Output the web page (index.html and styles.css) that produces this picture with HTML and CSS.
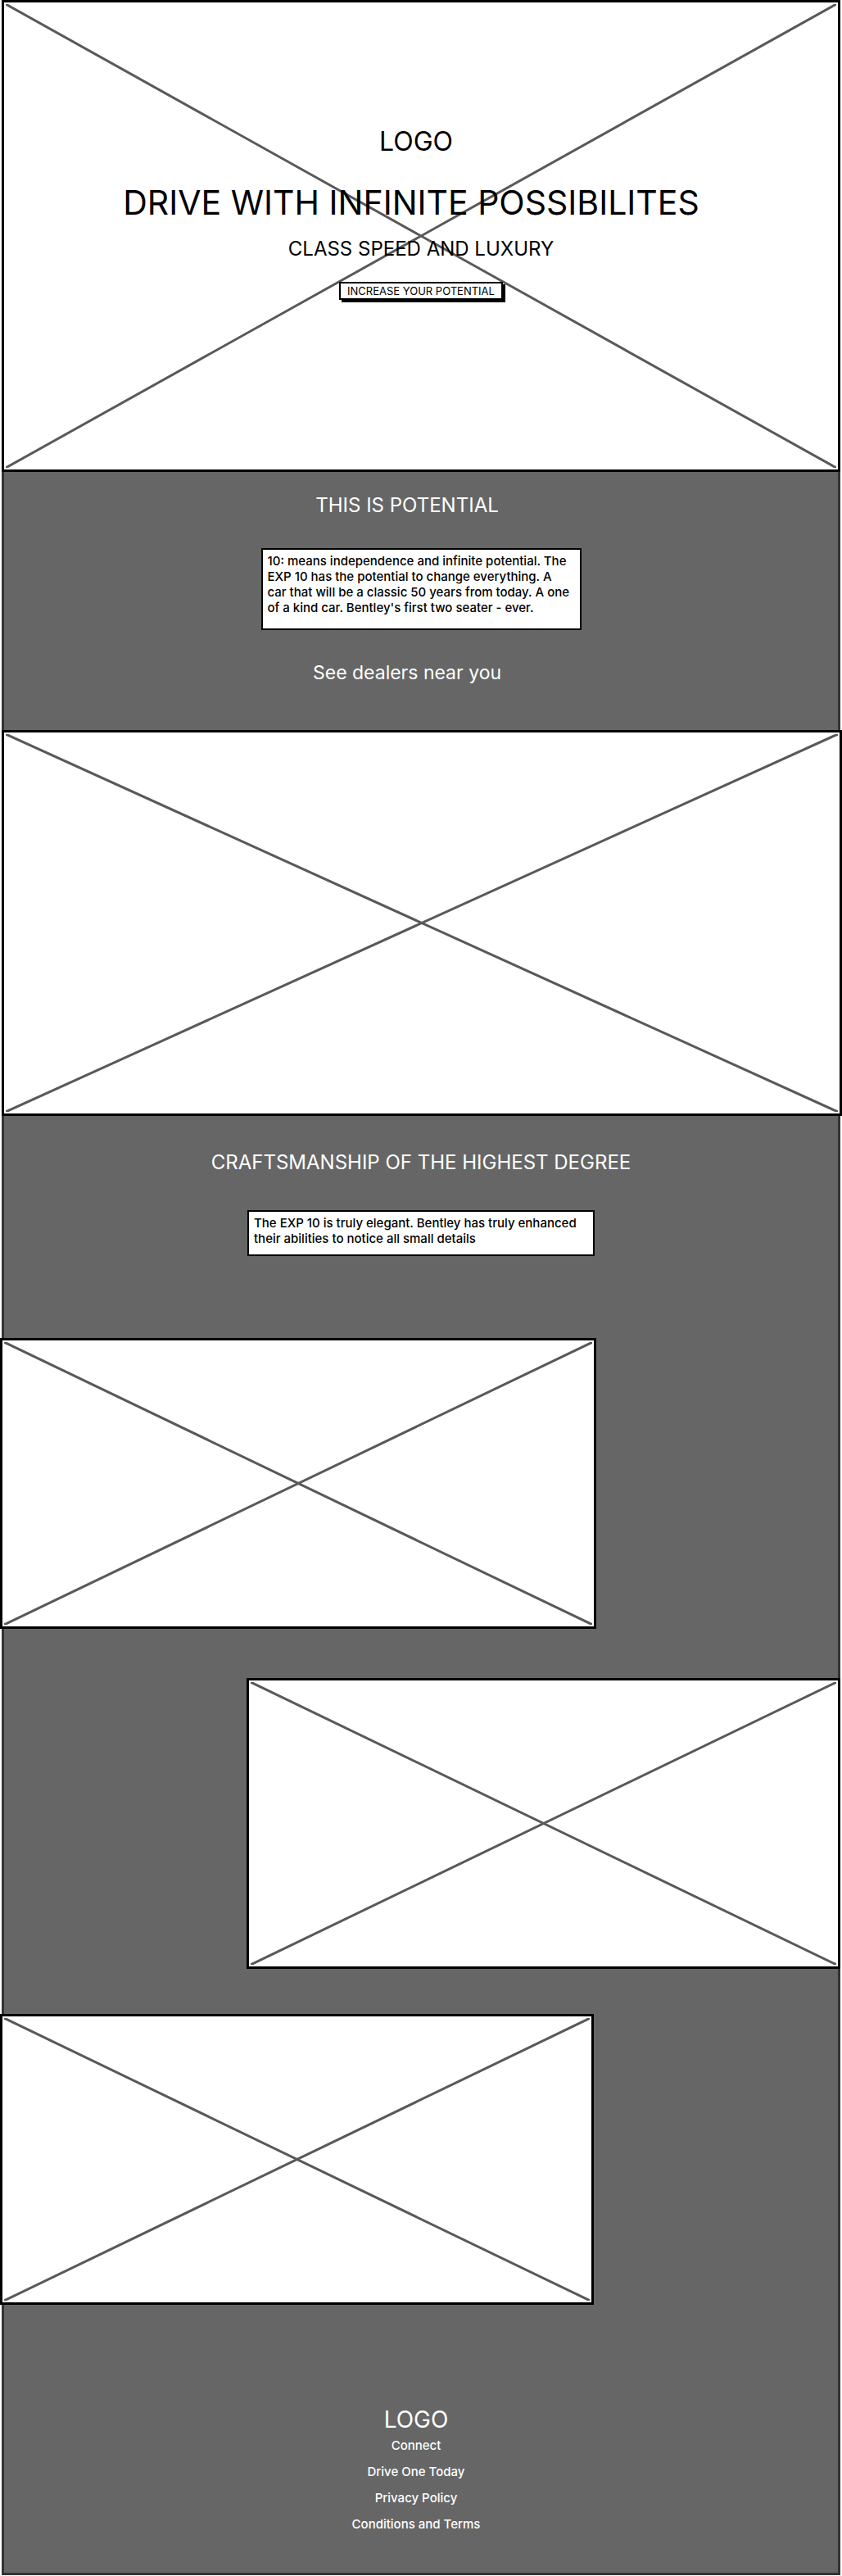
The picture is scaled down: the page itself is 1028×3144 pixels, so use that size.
FILE: index.html
```
<!DOCTYPE html>
<html lang="en">
<head>
<meta charset="utf-8">
<title>Drive with infinite possibilites</title>
<link rel="stylesheet" href="styles.css">
</head>
<body>
<div class="page">
  <header class="hero placeholder">
    <svg class="cross" preserveAspectRatio="none" viewBox="0 0 100 100" aria-hidden="true"><path d="M0 0L100 100M100 0L0 100"/></svg>
    <div class="hero-content">
      <p class="logo">LOGO</p>
      <h1 class="headline">DRIVE WITH INFINITE POSSIBILITES</h1>
      <p class="tagline">CLASS SPEED AND LUXURY</p>
      <button class="cta" type="button">INCREASE YOUR POTENTIAL</button>
    </div>
  </header>
  <main class="main">
    <section class="potential">
      <h2 class="section-title title-offset">THIS IS POTENTIAL</h2>
      <p class="note note-potential">10: means independence and infinite potential. The<br>EXP 10 has the potential to change everything. A<br>car that will be a classic 50 years from today. A one<br>of a kind car. Bentley's first two seater - ever.</p>
      <a class="dealers title-offset" href="#dealers">See dealers near you</a>
    </section>
    <div class="placeholder banner">
      <svg class="cross" preserveAspectRatio="none" viewBox="0 0 100 100" aria-hidden="true"><path d="M0 0L100 100M100 0L0 100"/></svg>
    </div>
    <section class="craft">
      <h2 class="section-title">CRAFTSMANSHIP OF THE HIGHEST DEGREE</h2>
      <p class="note note-craft">The EXP 10 is truly elegant. Bentley has truly enhanced<br>their abilities to notice all small details</p>
    </section>
    <div class="gallery">
      <div class="placeholder shot shot-wide">
        <svg class="cross" preserveAspectRatio="none" viewBox="0 0 100 100" aria-hidden="true"><path d="M0 0L100 100M100 0L0 100"/></svg>
      </div>
      <div class="placeholder shot shot-right">
        <svg class="cross" preserveAspectRatio="none" viewBox="0 0 100 100" aria-hidden="true"><path d="M0 0L100 100M100 0L0 100"/></svg>
      </div>
      <div class="placeholder shot">
        <svg class="cross" preserveAspectRatio="none" viewBox="0 0 100 100" aria-hidden="true"><path d="M0 0L100 100M100 0L0 100"/></svg>
      </div>
    </div>
  </main>
  <footer class="footer">
    <p class="footer-logo">LOGO</p>
    <nav class="links">
      <a href="#connect">Connect</a>
      <a href="#drive">Drive One Today</a>
      <a href="#privacy">Privacy Policy</a>
      <a href="#terms">Conditions and Terms</a>
    </nav>
  </footer>
</div>
</body>
</html>
```
FILE: styles.css
```
* {
  box-sizing: border-box;
}

body {
  margin: 0;
  background: #fff;
  color: #000;
  font-family: Inter, Lato, sans-serif;
}

h1, h2, p {
  margin: 0;
  font-weight: 400;
}

a {
  color: inherit;
  text-decoration: none;
}

.page {
  margin: 0 2px 2px;
  background: #666;
  border: solid #333;
  border-width: 0 3px 3px;
}

.placeholder {
  position: relative;
  background: #fff;
  border: 3px solid #000;
}

.cross {
  position: absolute;
  inset: 2px;
  width: calc(100% - 4px);
  height: calc(100% - 4px);
}

.cross path {
  fill: none;
  stroke: #595959;
  stroke-width: 3px;
  vector-effect: non-scaling-stroke;
}

.hero {
  height: 576px;
  margin: 0 -3px;
}

.hero-content {
  position: relative;
  display: flex;
  flex-direction: column;
  align-items: center;
  padding-top: 150px;
}

.logo {
  padding-right: 12px;
  font-size: 32px;
  line-height: 40px;
}

.headline {
  margin-top: 30px;
  padding-right: 24px;
  font-size: 41px;
  line-height: 48px;
  white-space: nowrap;
}

.tagline {
  margin-top: 17px;
  font-size: 24px;
  line-height: 32px;
}

.cta {
  width: 200px;
  margin-top: 24px;
  padding: 0;
  border: 2px solid #000;
  background: #fff;
  color: #000;
  box-shadow: 3px 3px 0 #000;
  font: 13px/18px Inter, Lato, sans-serif;
}

.potential {
  display: flex;
  flex-direction: column;
  align-items: center;
  height: 315px;
  padding-top: 25px;
  color: #fff;
}

.section-title {
  font-size: 24px;
  line-height: 32px;
  text-align: center;
}

.title-offset {
  padding-right: 34px;
}

.note {
  padding: 4px 6px;
  border: 2px solid #000;
  background: #fff;
  color: #000;
  font-size: 15px;
  font-weight: 500;
  line-height: 19px;
  white-space: nowrap;
}

.note-potential {
  width: 391px;
  height: 100px;
  margin-top: 36px;
}

.dealers {
  margin-top: 36px;
  font-size: 23px;
  line-height: 32px;
}

.banner {
  height: 471px;
  margin: 0 -5px 0 -3px;
}

.craft {
  display: flex;
  flex-direction: column;
  align-items: center;
  height: 271px;
  padding-top: 41px;
  color: #fff;
}

.note-craft {
  width: 424px;
  height: 56px;
  margin-top: 42px;
}

.gallery {
  display: flex;
  flex-direction: column;
  margin: 0 -3px 0 -5px;
}

.shot {
  width: calc(71% - 3px);
  height: 355px;
  margin-top: 55px;
}

.shot-wide {
  width: 71%;
  margin-top: 0;
}

.shot-right {
  align-self: flex-end;
  margin-top: 60px;
}

.footer {
  display: flex;
  flex-direction: column;
  align-items: center;
  padding: 124px 12px 43px 0;
  color: #fff;
}

.footer-logo {
  font-size: 28px;
  line-height: 32px;
}

.links {
  display: flex;
  flex-direction: column;
  align-items: center;
  font-size: 15px;
  font-weight: 500;
  line-height: 32px;
}
```
